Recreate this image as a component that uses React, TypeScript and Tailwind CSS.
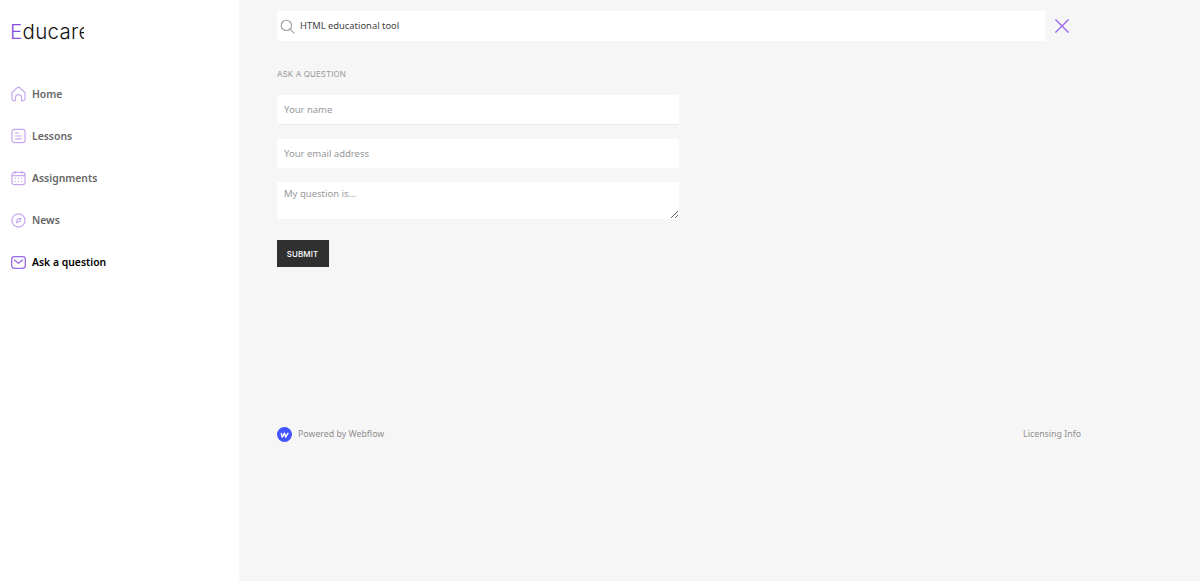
const font = "font-['Noto_Sans',sans-serif]"

function HomeIcon() {
  return (
    <svg viewBox="0 0 16 16" fill="none" stroke="currentColor" strokeWidth="1.3" strokeLinecap="round" strokeLinejoin="round" className="w-[15px] h-[16px]">
      <path d="M1 6.6 6.400 1.500a2.300 2.300 0 0 1 3.200 0L15 6.600V13a2 2 0 0 1-2 2h-1.800v-3.200a3.200 3.200 0 0 0-6.400 0V15H3a2 2 0 0 1-2-2Z" />
    </svg>
  )
}

function LessonsIcon() {
  return (
    <svg viewBox="0 0 16 16" fill="none" stroke="currentColor" strokeWidth="1.3" strokeLinecap="round" className="w-[15px] h-[16px]">
      <rect x="1" y="1" width="14" height="14" rx="2.500" />
      <path d="M5 5h2.500M5 8h6M5 11h6" />
    </svg>
  )
}

function CalendarIcon() {
  return (
    <svg viewBox="0 0 16 16" fill="none" stroke="currentColor" strokeWidth="1.3" strokeLinecap="round" className="w-[15px] h-[16px]">
      <rect x="1" y="2" width="14" height="13" rx="2.500" />
      <path d="M1 5.500h14M4.500 1v2M11.500 1v2" />
      <path d="M4.500 8.200h.1M8 8.200h.1M11.500 8.200h.1M4.500 11.500h.1M8 11.500h.1M11.500 11.500h.1" />
    </svg>
  )
}

function CompassIcon() {
  return (
    <svg viewBox="0 0 16 16" fill="none" stroke="currentColor" strokeWidth="1.3" strokeLinejoin="round" className="w-[15px] h-[15px]">
      <circle cx="8" cy="8" r="7" />
      <path d="M10.600 5.400 9.600 9 6 10.400 6.800 6.600Z" />
    </svg>
  )
}

function MailIcon() {
  return (
    <svg viewBox="0 0 16 16" fill="none" stroke="currentColor" strokeWidth="1.400" strokeLinecap="round" strokeLinejoin="round" className="w-[15px] h-[15px]">
      <rect x="0.700" y="1.800" width="14.600" height="12.400" rx="3" />
      <path d="M3.600 5.400 8 8.800l4.400-3.400" />
    </svg>
  )
}

const navItems = [
  { label: 'Home', icon: <HomeIcon /> },
  { label: 'Lessons', icon: <LessonsIcon /> },
  { label: 'Assignments', icon: <CalendarIcon /> },
  { label: 'News', icon: <CompassIcon /> },
]

export default function App() {
  return (
    <div className={`flex min-h-[581px] bg-[#f6f6f6] ${font}`}>
      <aside className="w-[239px] shrink-0 bg-white pl-[10px]">
        <div className="mt-[18px] h-[28px] w-[74px] overflow-hidden whitespace-nowrap font-['Inter',sans-serif] text-[20.500px] leading-[28px] font-light tracking-[0.3px] text-[#111]">
          <span className="text-[#8a4fe0]">E</span>ducare
        </div>
        <nav className="mt-[27.500px] flex flex-col">
          {navItems.map(item => (
            <a key={item.label} href="#" className="flex h-[42.100px] items-center gap-[6px] text-[10.400px] font-semibold text-[#666]">
              <span className="-mt-[1px] flex w-4 justify-center text-[#c6a8ee]">{item.icon}</span>
              {item.label}
            </a>
          ))}
          <a href="#" className="flex h-[42.100px] items-center gap-[6px] text-[10.400px] font-semibold text-black">
            <span className="-mt-[1px] flex w-4 justify-center text-[#9a6be6]"><MailIcon /></span>
            Ask a question
          </a>
        </nav>
      </aside>

      <main className="flex-1 pl-[38px] pr-[119px]">
        <div className="mt-[11px] flex items-center">
          <div className="flex h-[30px] w-[768px] items-center gap-[5px] bg-white pl-[3px] text-[9.400px] text-[#444]">
            <svg viewBox="0 0 16 16" fill="none" stroke="#a0a0a0" strokeWidth="1.200" strokeLinecap="round" className="h-[15px] w-[15px] shrink-0">
              <circle cx="6.800" cy="6.800" r="5.500" />
              <path d="M10.800 10.800 15 15" />
            </svg>
            HTML educational tool
          </div>
          <svg viewBox="0 0 16 16" fill="none" stroke="#9763e8" strokeWidth="1.500" className="mb-[1px] ml-[10px] h-[14px] w-[14px]">
            <path d="M.5.5l15 15M15.500.5l-15 15" />
          </svg>
        </div>

        <h2 className="mt-[28px] font-['Inter',sans-serif] text-[8px] leading-[11px] tracking-[0.1px] text-[#999] uppercase">Ask a question</h2>

        <form className="mt-[15px] flex w-[402px] flex-col">
          <input placeholder="Your name" className="h-[30px] rounded-[2px] border-b border-[#ececec] bg-white px-[7px] pb-[1px] text-[9.500px] outline-none placeholder:text-[#999]" />
          <input placeholder="Your email address" className="mt-[14px] h-[29px] rounded-[2px] bg-white px-[7px] pb-[1px] text-[9.500px] outline-none placeholder:text-[#999]" />
          <textarea placeholder="My question is..." className="mt-[14px] h-[37px] rounded-[2px] bg-white px-[7px] py-[5px] text-[9.500px] leading-[14px] outline-none placeholder:text-[#999]" />
          <button type="button" className="mt-[21px] h-[27px] w-[52px] bg-[#303030] pr-[1px] font-['Inter',sans-serif] text-[8px] tracking-[0.1px] font-medium text-white">
            SUBMIT
          </button>
        </form>

        <footer className="mt-[160px] flex items-center justify-between text-[8.800px] text-[#8f8f8f]">
          <div className="flex items-center gap-[6px]">
            <span className="flex h-[15px] w-[15px] items-center justify-center rounded-full bg-[#4353ff]">
              <svg viewBox="0 0 12 8" fill="none" stroke="white" strokeWidth="1.800" strokeLinejoin="round" className="h-[6px] w-[9px]">
                <path d="M1.500 1.200 3 6.800 6 1.500 7.500 6.800 11 1.200" />
              </svg>
            </span>
            Powered by Webflow
          </div>
          <span>Licensing Info</span>
        </footer>
      </main>
    </div>
  )
}
